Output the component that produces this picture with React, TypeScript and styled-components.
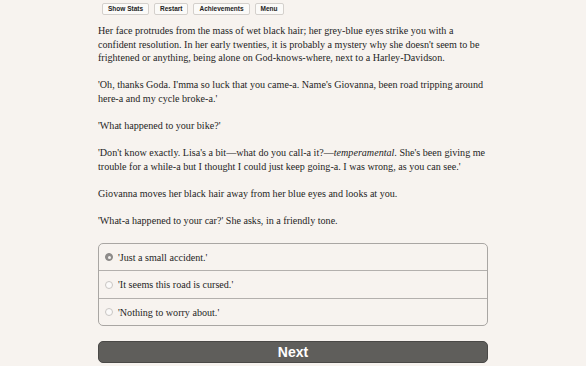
import styled, { createGlobalStyle } from 'styled-components';

const GlobalStyle = createGlobalStyle`
  html, body {
    margin: 0;
    padding: 0;
    background: #f7f3ef;
  }
`;

const Page = styled.div`
  width: 390px;
  margin: 0 auto;
  display: flex;
  flex-direction: column;
  font-family: 'Liberation Serif', 'Times New Roman', serif;
  color: #1e1e1e;
`;

const Toolbar = styled.div`
  display: flex;
  gap: 5px;
  padding: 3px 0 0 4px;
  height: 15px;
`;

const ToolButton = styled.button`
  font-family: 'Liberation Sans', Arial, sans-serif;
  font-size: 6.5px;
  font-weight: bold;
  color: #222;
  background: #fbfaf8;
  border: 1px solid #d4d0cc;
  border-radius: 2px;
  height: 12px;
  padding: 0 5px;
  line-height: 10px;
`;

const Story = styled.div`
  padding-top: 6px;
  font-size: 10.1px;
  line-height: 13.6px;
`;

const Para = styled.p`
  margin: 0 0 13.6px 0;
`;

const Choices = styled.div`
  margin-top: 15px;
  border: 1px solid #a9a6a3;
  border-radius: 5px;
  display: flex;
  flex-direction: column;
`;

const Choice = styled.label<{ first?: boolean }>`
  display: flex;
  align-items: center;
  gap: 5px;
  height: 26.5px;
  padding-left: 6px;
  font-size: 10.1px;
  border-top: ${(p) => (p.first ? 'none' : '1px solid #b3b0ad')};
`;

const Radio = styled.span<{ checked?: boolean }>`
  width: 8px;
  height: 8px;
  border-radius: 50%;
  box-sizing: border-box;
  border: 1px solid ${(p) => (p.checked ? '#8a8886' : '#c9c6c3')};
  background: ${(p) => (p.checked ? '#8f8d8b' : '#fbfaf9')};
  display: flex;
  align-items: center;
  justify-content: center;
  &::after {
    content: '';
    width: 3px;
    height: 3px;
    border-radius: 50%;
    background: ${(p) => (p.checked ? '#f2f0ee' : 'transparent')};
  }
`;

const NextButton = styled.button`
  margin-top: 15px;
  height: 22px;
  background: #5f5e5b;
  border: 1px solid #4a4947;
  border-radius: 5px;
  color: #fff;
  font-family: 'Liberation Sans', Arial, sans-serif;
  font-weight: bold;
  font-size: 14px;
  padding: 0;
`;

const options = ["'Just a small accident.'", "'It seems this road is cursed.'", "'Nothing to worry about.'"];

export default function App() {
  return (
    <>
      <GlobalStyle />
      <Page>
        <Toolbar>
          <ToolButton>Show Stats</ToolButton>
          <ToolButton>Restart</ToolButton>
          <ToolButton>Achievements</ToolButton>
          <ToolButton>Menu</ToolButton>
        </Toolbar>
        <Story>
          <Para>
            Her face protrudes from the mass of wet black hair; her grey-blue eyes strike you with a confident
            resolution. In her early twenties, it is probably a mystery why she doesn't seem to be frightened or
            anything, being alone on God-knows-where, next to a Harley-Davidson.
          </Para>
          <Para>
            'Oh, thanks Goda. I'mma so luck that you came-a. Name's Giovanna, been road tripping around here-a and my
            cycle broke-a.'
          </Para>
          <Para>'What happened to your bike?'</Para>
          <Para>
            'Don't know exactly. Lisa's a bit—what do you call-a it?—<i>temperamental</i>. She's been giving me trouble
            for a while-a but I thought I could just keep going-a. I was wrong, as you can see.'
          </Para>
          <Para>Giovanna moves her black hair away from her blue eyes and looks at you.</Para>
          <Para style={{ marginBottom: 0 }}>'What-a happened to your car?' She asks, in a friendly tone.</Para>
        </Story>
        <Choices>
          {options.map((o, i) => (
            <Choice key={o} first={i === 0}>
              <Radio checked={i === 0} />
              {o}
            </Choice>
          ))}
        </Choices>
        <NextButton>Next</NextButton>
      </Page>
    </>
  );
}
